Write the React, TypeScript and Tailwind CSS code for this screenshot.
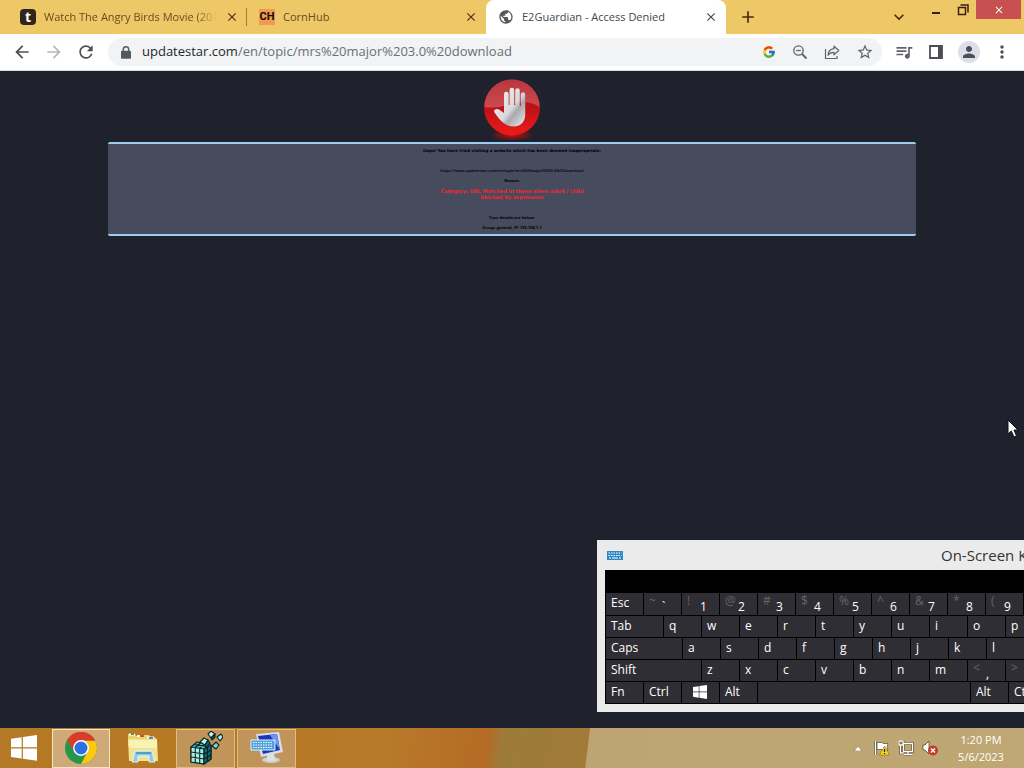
import React from "react";
import { FcGoogle } from "react-icons/fc";
import {
  MdArrowBack,
  MdArrowForward,
  MdRefresh,
  MdStarBorder,
  MdQueueMusic,
  MdPerson,
  MdMoreVert,
  MdPublic,
  MdClose,
  MdAdd,
  MdExpandMore,
} from "react-icons/md";

const LockIcon = () => (
  <svg viewBox="0 0 10 13" className="h-[13px] w-[10px] shrink-0">
    <path d="M2.300 6V3.500a2.700 2.700 0 0 1 5.400 0V6" fill="none" stroke="#55595e" strokeWidth="1.400" />
    <rect y="4.800" width="10" height="8" rx="1" fill="#55595e" />
  </svg>
);

const MagnifierIcon = () => (
  <svg viewBox="0 0 16 16" className="size-4" fill="none" stroke="#5f6368" strokeWidth="1.3">
    <circle cx="6.5" cy="6.5" r="4.700" />
    <path d="M10 10 14.500 14.500" strokeWidth="1.8" />
    <path d="M4.200 6.5h4.600" />
  </svg>
);

const ShareIcon = () => (
  <svg viewBox="0 0 16 16" className="size-4" fill="none" stroke="#5f6368" strokeWidth="1.2">
    <path d="M1.500 5v9.500h11.500V12" />
    <path d="M10 2.200 14.800 6.500 10 10.800V8.300C7 8.200 5.200 9.200 4 11.300 4.300 7.500 6.300 5 10 4.700Z" strokeLinejoin="round" />
  </svg>
);

const WindowsLogo = ({ className }: { className: string }) => (
  <svg viewBox="0 0 28 28" className={className} fill="#fff">
    <path d="M0 4 11.500 2.300V13.200H0ZM12.800 2.100 28 0V13.200H12.800ZM0 14.500H11.500V25.300L0 23.700ZM12.800 14.500H28V27.800L12.800 25.500Z" />
  </svg>
);

const ChromeLogo = () => (
  <svg viewBox="0 0 32 32" className="size-8">
    <circle cx="16" cy="16" r="16" fill="#27964a" />
    <path d="M22.500 19.800 16 32A16 16 0 0 0 30.100 8.500H16Z" fill="#fbc914" />
    <path d="M16 8.500H30.100A16 16 0 0 0 2.140 8L9.400 20Z" fill="#dc3b2c" />
    <circle cx="16" cy="16" r="7.900" fill="#fff" />
    <circle cx="16" cy="16" r="6.500" fill="#2b70e4" />
  </svg>
);

const FolderIcon = () => (
  <svg viewBox="0 0 32 32" className="size-8">
    <path d="M1 4.500V2h7l1 2h5l1-1h7l1 2h4l3 2v7H1Z" fill="#e8d36e" />
    <path d="M2 2.500h6M10 4h7M20 5.500h7" stroke="#fffbe0" strokeWidth="2" />
    <path d="M4 2h3" stroke="#46a04b" strokeWidth="2" />
    <path d="M13 4h4" stroke="#d64b36" strokeWidth="2" />
    <path d="M22 6h4" stroke="#4f8dc8" strokeWidth="2" />
    <path d="M1 7h29l1 22H2Z" fill="#f3e38e" />
    <path d="M2 8h28v8H2Z" fill="#faf2b4" />
    <path d="M5 30c2-3 2-10 3-11h17c1 1 1 8 3 11h-6v-6H11v6Z" fill="#8ecbe9" stroke="#e2f6ff" strokeWidth="1" />
    <path d="M9 21h15" stroke="#4f9fce" strokeWidth="2" />
  </svg>
);

const RegistryIcon = () => (
  <svg viewBox="0 0 34 34" className="size-[34px]" stroke="#0b2224" strokeWidth="1.100" strokeLinejoin="round">
    <path d="M2 16 8 11 21 13 22 15V28L15 33 2 31Z" fill="#49bdb8" />
    <path d="M2 16 15 18V33L2 31Z" fill="#a4eee6" />
    <path d="M15 18 22 14V28L15 33Z" fill="#12696a" />
    <path d="M2 21 15 23 22 19M2 26 15 28 22 24M6.300 17V32M10.700 17V33M18.500 16V31M5 13.500 18.500 15.500M6.300 16.500 12 11.500M10.700 17 17 12.500" fill="none" />
    <path d="m11 11 4-4 4 2-3 5Z" fill="#b8f5ed" />
    <path d="m19 9 2 3-4 5-1-3Z" fill="#12696a" />
    <path d="m19 3 3-3 4 3-4 4Z" fill="#b8f5ed" />
    <path d="m22 7 4-4 0 3-3 3Z" fill="#12696a" />
    <path d="m28 6 4-3 2 3-3 4Z" fill="#9eeee5" />
    <path d="m23 15 4-4 3 3-3 4Z" fill="#71d8d0" />
  </svg>
);

const MonitorIcon = () => (
  <svg viewBox="0 0 34 32" className="h-8 w-[34px]">
    <ellipse cx="21" cy="28" rx="9" ry="3" fill="#cbd0d4" />
    <path d="M17 22h7l2 7h-9Z" fill="#dce0e4" />
    <path d="M6 2 29 0 33 20 11 25Z" fill="#d9dde5" />
    <path d="M8 4 27 2 30 18 13 22Z" fill="#1b35b4" />
    <path d="M20 3 27 2 30 18Z" fill="#7192ee" />
    <path d="M1 8h24v10H1Z" fill="#4ba3dc" stroke="#e2f4fe" />
    <path d="M3 10.500h20M3 13h20M3 15.500h20" stroke="#fff" strokeWidth="1.200" strokeDasharray="1.500 1" />
  </svg>
);

const StopHand = () => (
  <svg viewBox="0 0 60 62" className="h-[62px] w-[60px]">
    <defs>
      <linearGradient id="ball" x1="0" y1="0" x2="0" y2="1">
        <stop offset="0" stopColor="#a51e25" />
        <stop offset="0.500" stopColor="#bd1218" />
        <stop offset="1" stopColor="#f01a1a" />
      </linearGradient>
      <linearGradient id="gloss" x1="0" y1="0" x2="0" y2="1">
        <stop offset="0" stopColor="#bd3a42" />
        <stop offset="1" stopColor="#cb5558" />
      </linearGradient>
      <linearGradient id="palm" x1="0" y1="0" x2="1" y2="1">
        <stop offset="0" stopColor="#f4f4f4" />
        <stop offset="0.550" stopColor="#d9d9dc" />
        <stop offset="0.660" stopColor="#a9a9ae" />
        <stop offset="1" stopColor="#eeeeee" />
      </linearGradient>
      <radialGradient id="glow">
        <stop offset="0" stopColor="#b5141a" />
        <stop offset="0.500" stopColor="#7d1519" />
        <stop offset="1" stopColor="#7d1519" stopOpacity="0" />
      </radialGradient>
    </defs>
    <ellipse cx="30" cy="56" rx="22" ry="6" fill="url(#glow)" />
    <circle cx="30" cy="28.500" r="28" fill="url(#ball)" />
    <path d="M2.500 28A27.500 27.500 0 0 1 57.500 28Q45 20 30 25 14 30 2.500 28Z" fill="url(#gloss)" opacity="0.850" />
    <path
      d="M22 32V15a2.300 2.300 0 0 1 4.600 0V26h1V11a2.300 2.300 0 0 1 4.600 0V26h1V11.500a2.300 2.300 0 0 1 4.600 0V27h1V15a2.300 2.300 0 0 1 4.400 0V36C43.200 43 38 47.500 32 47.500 24 47.500 19 43 12.500 33.500 11 31 14 29 17 30.500L22 34Z"
      fill="url(#palm)"
    />
  </svg>
);

type TabProps = { title: string; icon: React.ReactNode; active?: boolean; fade?: boolean };

const Tab = ({ title, icon, active, fade }: TabProps) => (
  <div
    className={
      active
        ? "flex h-[34px] w-60 shrink-0 items-center gap-2 rounded-t-lg bg-white pl-3 pr-2 text-[#45484b]"
        : "flex h-[34px] w-[239px] shrink-0 items-center gap-2 pl-3 pr-2 text-[#6a4a20]"
    }
  >
    {icon}
    <span
      className={
        fade
          ? "min-w-0 flex-1 overflow-hidden whitespace-nowrap [mask-image:linear-gradient(to_right,black_88%,transparent)]"
          : "min-w-0 flex-1 overflow-hidden whitespace-nowrap"
      }
    >
      {title}
    </span>
    <button aria-label="Close tab" className={active ? "text-[#45484b]" : "text-[#6a2020]"}>
      <MdClose className="size-[14px] shrink-0 stroke-current" />
    </button>
  </div>
);

type KeyDef = { label: React.ReactNode; shift?: string; width?: string; name?: string };

const plain = (s: string): KeyDef[] => s.split("").map((label) => ({ label }));

const rows: KeyDef[][] = [
  [
    { label: "Esc" },
    { label: "`", shift: "~" },
    { label: "1", shift: "!" },
    { label: "2", shift: "@" },
    { label: "3", shift: "#" },
    { label: "4", shift: "$" },
    { label: "5", shift: "%" },
    { label: "6", shift: "^" },
    { label: "7", shift: "&" },
    { label: "8", shift: "*" },
    { label: "9", shift: "(" },
  ],
  [{ label: "Tab", width: "w-[57px]" }, ...plain("qwertyuiop")],
  [{ label: "Caps", width: "w-[76px]" }, ...plain("asdfghjkl")],
  [{ label: "Shift", width: "w-[95px]" }, ...plain("zxcvbnm"), { label: ",", shift: "<" }, { label: "", shift: ">", name: "Period" }],
  [
    { label: "Fn" },
    { label: "Ctrl" },
    { label: <WindowsLogo className="ml-[6px] mt-[3px] size-[14px]" />, name: "Windows" },
    { label: "Alt" },
    { label: "", width: "w-[212px]", name: "Space" },
    { label: "Alt" },
    { label: "Ctrl" },
  ],
];

const Key = ({ label, shift, width = "w-[37px]", name }: KeyDef) => (
  <button
    aria-label={name}
    className={`${width} flex shrink-0 items-start overflow-hidden bg-[#2f2e34] px-[5px] text-left text-[12px] leading-[19px] text-white`}
  >
    {shift ? (
      <>
        <span className="w-[13px] shrink-0 text-[12px] leading-[16px] text-[#66656b]">{shift}</span>
        <span className="pt-1">{label}</span>
      </>
    ) : (
      label
    )}
  </button>
);

const taskButton = "flex h-[39px] w-[59px] items-center justify-center border border-[#dfbd83] bg-[#c1945a]";

export default function App() {
  return (
    <div className="flex h-screen flex-col overflow-hidden bg-[#1f222c] font-['Open_Sans','Noto_Sans',sans-serif]">
      <header className="shrink-0">
        <div className="flex h-[34px] bg-[#eec866] pl-2 text-[11px]">
          <Tab
            title="Watch The Angry Birds Movie (2016)"
            fade
            icon={
              <span className="flex size-4 shrink-0 items-center justify-center rounded bg-[#30251a] text-[14px] font-bold leading-none text-white">
                t
              </span>
            }
          />
          <div className="-ml-px my-2 w-px shrink-0 bg-[#9d7c3b]" />
          <Tab
            title="CornHub"
            icon={
              <span className="flex size-4 shrink-0 items-center justify-center bg-[#ee9a50] font-['Liberation_Sans_Narrow','Roboto',sans-serif] text-[11px] font-bold text-[#200306]">
                CH
              </span>
            }
          />
          <Tab title="E2Guardian - Access Denied" active icon={<MdPublic className="size-4 shrink-0 text-[#53575b]" />} />
          <button aria-label="New tab" className="ml-3 text-[#4b2815]">
            <MdAdd className="size-5" />
          </button>
          <div className="ml-auto flex items-start">
            <button aria-label="Search tabs" className="flex h-[34px] items-center text-[#4b2815]">
              <MdExpandMore className="size-5" />
            </button>
            <button aria-label="Minimize" className="ml-[14px] flex h-[21px] w-[26px] items-center justify-center">
              <svg viewBox="0 0 10 10" className="size-[10px]">
                <path d="M1 7h8" stroke="#3a1f10" strokeWidth="2" />
              </svg>
            </button>
            <button aria-label="Restore" className="flex h-[19px] w-[27px] items-center justify-center">
              <svg viewBox="0 0 12 12" className="size-3" fill="none" stroke="#3a1f10" strokeWidth="1.500">
                <path d="M1.500 3.500h7v7h-7ZM3.500 1h7.500v7.500" />
              </svg>
            </button>
            <button aria-label="Close" className="mr-[3px] flex h-[19px] w-[45px] items-center justify-center bg-[#c75050] text-white">
              <MdClose className="size-3 stroke-current" />
            </button>
          </div>
        </div>
        <div className="flex h-[37px] items-center border-b border-[#d9dbdd] bg-white text-[#5f6368]">
          <div className="flex items-center gap-3 pl-3">
            <button aria-label="Back"><MdArrowBack className="size-5 text-[#4b4f54]" /></button>
            <button aria-label="Forward"><MdArrowForward className="size-5 text-[#b5b7b9]" /></button>
            <button aria-label="Reload"><MdRefresh className="size-5 text-[#4b4f54]" /></button>
          </div>
          <div className="ml-3 flex h-7 min-w-0 flex-1 items-center rounded-full bg-[#f1f3f4] pl-[13px] pr-2">
            <LockIcon />
            <a href="#address" className="ml-[11px] min-w-0 flex-1 whitespace-nowrap text-[13px] text-[#6b6f74]">
              <span className="text-[#26282b]">updatestar.com</span>/en/topic/mrs%20major%203.0%20download
            </a>
            <div className="flex items-center gap-4">
              <button aria-label="Google"><FcGoogle className="size-[14px]" /></button>
              <button aria-label="Zoom"><MagnifierIcon /></button>
              <button aria-label="Share"><ShareIcon /></button>
              <button aria-label="Bookmark"><MdStarBorder className="size-[18px]" /></button>
            </div>
          </div>
          <div className="flex items-center gap-3 pl-3 pr-3">
            <button aria-label="Media"><MdQueueMusic className="size-5" /></button>
            <button aria-label="Side panel" className="px-[3px]">
              <svg viewBox="0 0 14 14" className="size-[14px]" fill="none" stroke="#4b4f54" strokeWidth="1.800">
                <path d="M1 1h12v12H1Z" />
                <path d="M11 1v12" strokeWidth="4" />
              </svg>
            </button>
            <button aria-label="Profile" className="flex size-[22px] items-center justify-center rounded-full bg-[#dcdfe8]">
              <MdPerson className="size-[18px] text-[#4b5058]" />
            </button>
            <button aria-label="Menu"><MdMoreVert className="size-5 text-[#4b4f54]" /></button>
          </div>
        </div>
      </header>

      <main className="relative min-h-0 flex-1 overflow-hidden">
        <div className="flex justify-center pt-2">
          <StopHand />
        </div>
        <section className="mx-[108px] mt-px flex h-[94px] flex-col items-center rounded-xs border-y-2 border-[#9ccdf0] bg-[#464c5d] pt-1 text-center text-[4px] leading-[6px] text-black">
          <p className="font-['DejaVu_Sans',sans-serif] font-bold">
            Oops! You have tried visiting a website which has been deemed inappropriate:
          </p>
          <p className="mt-[14px] font-semibold">https://www.updatestar.com/en/topic/mrs%20major%203.0%20download</p>
          <p className="mt-1 font-bold">Reason:</p>
          <p className="mt-1 font-['DejaVu_Sans',sans-serif] text-[5px] font-bold text-[#f3252f]">
            Category: URL Matched in these sites: adult / child
            <br />
            blocked by expression
          </p>
          <p className="mt-[15px] font-bold">Your details are below:</p>
          <p className="mt-1 font-bold">Group: general, IP: 192.168.1.1</p>
        </section>

        <svg viewBox="0 0 12 19" className="absolute right-[5px] top-[348px] h-[19px] w-3">
          <path d="M1 1V15L4.300 12 7 18 9.500 17 7 11H11Z" fill="#fff" stroke="#111" strokeWidth="1" />
        </svg>

        <section
          aria-label="On-Screen Keyboard"
          className="absolute bottom-4 left-[597px] right-0 overflow-hidden bg-[#ebebeb] pb-2 pl-2"
        >
          <div className="flex h-[30px] items-center">
            <svg viewBox="0 0 16 9" className="ml-[2px] h-[9px] w-4 shrink-0">
              <path d="M0 0h16v9H0Z" fill="#2e88c4" />
              <path d="M1.500 2h13M1.500 4.500h13" stroke="#fff" strokeWidth="1.200" strokeDasharray="1.500 1" />
              <path d="M2 7h2M5 7h6M12 7h2" stroke="#fff" strokeWidth="1.200" />
            </svg>
            <h2 className="ml-[318px] whitespace-nowrap text-[15px] leading-[30px] text-[#333]">On-Screen Keyboard</h2>
          </div>
          <div className="grid grid-rows-[22px_21px_21px_21px_21px] gap-px bg-black pb-px pl-px pt-[23px]">
            {rows.map((row, i) => (
              <div key={i} className="flex gap-px">
                {row.map((k, j) => (
                  <Key key={j} {...k} />
                ))}
              </div>
            ))}
          </div>
        </section>
      </main>

      <footer className="flex h-10 shrink-0 items-center bg-[linear-gradient(97deg,#b47926_0%,#b67923_25%,#b8792a_38%,#b56b25_47.500%,#9c7b38_49%,#a17a38_57.300%,#bda472_57.400%,#bfa773_100%)]">
        <button aria-label="Start" className="flex w-[52px] items-center pl-[11px]">
          <WindowsLogo className="size-[26px]" />
        </button>
        <button aria-label="Chrome" className="flex h-[39px] w-[58px] items-center justify-center border border-[#f5e4c6] bg-[#cfa978]">
          <ChromeLogo />
        </button>
        <button aria-label="File Explorer" className="flex w-[66px] items-center justify-center">
          <FolderIcon />
        </button>
        <button aria-label="Registry Editor" className={taskButton}>
          <RegistryIcon />
        </button>
        <button aria-label="On-Screen Keyboard" className={`ml-[2px] ${taskButton}`}>
          <MonitorIcon />
        </button>
        <div className="ml-auto flex items-center gap-2 pr-4">
          <button aria-label="Show hidden icons" className="mr-1">
            <svg viewBox="0 0 8 5" className="h-[5px] w-2"><path d="M0 5 4 0l4 5Z" fill="#fff" stroke="#6b5632" strokeWidth="0.500" /></svg>
          </button>
          <button aria-label="Action center">
            <svg viewBox="0 0 16 16" className="size-4">
              <path d="M1.500 1v14" stroke="#57462b" strokeWidth="3" />
              <path d="M1.500 1v14" stroke="#fff" strokeWidth="1.500" />
              <path d="M3 2.500h5l1 1h5l-1 4 1 3H9l-1-1H3Z" fill="#fff" stroke="#57462b" strokeWidth="0.700" />
              <path d="M10.500 6 15.500 15h-10Z" fill="#f7d71c" stroke="#84711b" strokeWidth="0.600" />
              <path d="M10.500 9v3M10.500 13v1" stroke="#222" strokeWidth="1.200" />
            </svg>
          </button>
          <button aria-label="Network">
            <svg viewBox="0 0 16 16" className="size-4" fill="none">
              <path d="M5.500 3.500h9v8h-9ZM10 12v2M6 14.500h8M2.500 5v8h3M1 1h4v4H1Z" stroke="#57462b" strokeWidth="2.600" />
              <path d="M5.500 3.500h9v8h-9ZM10 12v2M6 14.500h8M2.500 5v8h3M1 1h4v4H1Z" stroke="#fff" strokeWidth="1.300" />
            </svg>
          </button>
          <button aria-label="Volume muted">
            <svg viewBox="0 0 16 16" className="size-4">
              <path d="M1 5h2l4-4v13l-4-4H1Z" fill="#fff" stroke="#57462b" strokeWidth="0.800" />
              <circle cx="11" cy="10.500" r="4.500" fill="#d33b2e" stroke="#8e2018" strokeWidth="0.600" />
              <path d="m9 8.500 4 4m0-4-4 4" stroke="#fff" strokeWidth="1.400" />
            </svg>
          </button>
          <div className="ml-2 w-[54px] whitespace-nowrap text-center text-[11px] leading-[17px] text-white">
            <div>1:20 PM</div>
            <div>5/6/2023</div>
          </div>
        </div>
      </footer>
    </div>
  );
}
